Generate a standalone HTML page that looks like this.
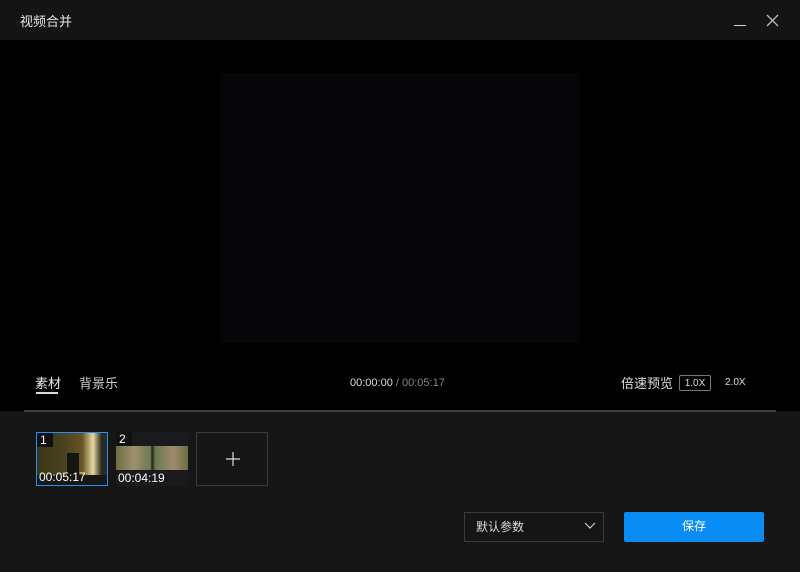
<!DOCTYPE html>
<html><head><meta charset="utf-8"><style>
*{margin:0;padding:0;box-sizing:border-box}
body{width:800px;height:572px;background:#161616;font-family:"Liberation Sans","Noto Sans CJK SC",sans-serif;color:#ddd;position:relative;overflow:hidden;font-size:12px}
.title{position:absolute;left:0;top:0;width:800px;height:40px;background:#141414}
.title span{position:absolute;left:20px;top:11px;font-size:13px;color:#e6e6e6}
.main{position:absolute;left:0;top:40px;width:800px;height:371px;background:#000}
.video{position:absolute;left:220px;top:73px;width:360px;height:270px;background:#060507}
.abs{position:absolute}
.line{position:absolute;left:24px;top:410px;width:752px;height:2px;background:#3d3d3d}
.thumb{position:absolute;top:432px;width:72px;height:54px;overflow:hidden}
.num{position:absolute;left:0;top:0;width:16px;height:14px;background:#111;color:#fff;font-size:12px;padding-left:3px;line-height:14px}
.time{position:absolute;left:2px;bottom:1px;color:#fff;font-size:12px}
</style></head><body>
<div class="title"><span>视频合并</span>
<div class="abs" style="left:734px;top:25px;width:12px;height:1px;background:#ccc"></div>
<svg class="abs" style="left:766px;top:14px" width="13" height="13"><path d="M1 1L12 12M12 1L1 12" stroke="#bbb" stroke-width="1.3"/></svg>
</div>
<div class="main"></div>
<div class="video"></div>
<div class="abs" style="left:35px;top:373px;font-size:13px;color:#eee">素材</div>
<div class="abs" style="left:36px;top:392px;width:22px;height:2px;background:#ddd"></div>
<div class="abs" style="left:79px;top:373px;font-size:13px;color:#ccc">背景乐</div>
<div class="abs" style="left:350px;top:377px;font-size:11px;color:#ddd">00:00:00 <span style="color:#888">/ 00:05:17</span></div>
<div class="abs" style="left:621px;top:373px;font-size:13px;color:#ddd">倍速预览</div>
<div class="abs" style="left:679px;top:375px;width:32px;height:16px;border:1px solid #777;border-radius:2px;font-size:10px;color:#ddd;text-align:center;line-height:15px">1.0X</div>
<div class="abs" style="left:725px;top:377px;font-size:10px;color:#ddd">2.0X</div>
<div class="line"></div>
<div class="thumb" style="left:36px;border:1px solid #1e90ff;background:linear-gradient(90deg,#3b3618 0%,#4a4220 40%,#6a5526 65%,#e8d8a0 80%,#2a2a20 92%)"><div style="position:absolute;left:30px;top:20px;width:12px;height:26px;background:#151510"></div><div style="position:absolute;left:0;top:42px;width:72px;height:12px;background:#1a1812"></div><div class="num">1</div><div class="time">00:05:17</div></div>
<div class="thumb" style="left:116px;background:#1a1a1e"><div style="position:absolute;left:0;top:14px;width:72px;height:24px;background:linear-gradient(90deg,#6a7040,#a09070 25%,#6a7a50 48%,#222 50%,#6a7a50 55%,#a08a70 80%,#6a7040)"></div><div class="num">2</div><div class="time">00:04:19</div></div>
<div class="abs" style="left:196px;top:432px;width:72px;height:54px;border:1px solid #3a3a3a"></div>
<svg class="abs" style="left:226px;top:452px" width="14" height="14"><path d="M7 0V14M0 7H14" stroke="#ddd" stroke-width="1.2"/></svg>
<div class="abs" style="left:464px;top:512px;width:140px;height:30px;border:1px solid #3a3a3a;background:#151515;font-size:12px;color:#ddd;padding:5px 0 0 11px">默认参数</div>
<svg class="abs" style="left:584px;top:522px" width="12" height="8"><path d="M1 1L6 6L11 1" stroke="#ccc" fill="none" stroke-width="1.2"/></svg>
<div class="abs" style="left:624px;top:512px;width:140px;height:30px;background:#0a8cf5;border-radius:2px;color:#fff;text-align:center;line-height:29px;font-size:12px">保存</div>
</body></html>
